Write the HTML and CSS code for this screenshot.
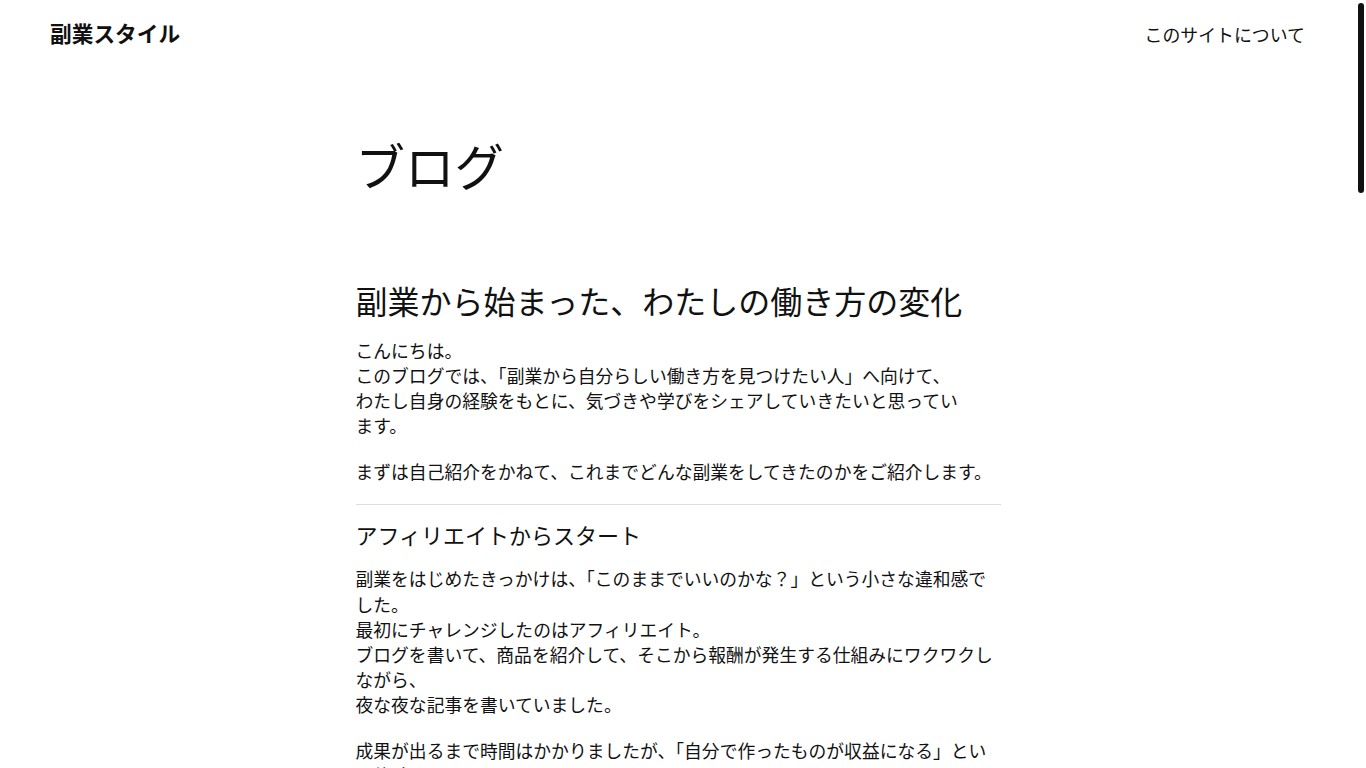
FILE: index.html
```html
<!DOCTYPE html>
<html lang="ja">
<head>
<meta charset="utf-8">
<title>ブログ | 副業スタイル</title>
<link rel="stylesheet" href="styles.css">
</head>
<body>
<div class="scroll-thumb" aria-hidden="true"></div>
<header class="site-header">
  <a class="logo" href="#">副業スタイル</a>
  <nav class="nav"><a href="#">このサイトについて</a></nav>
</header>
<main class="main">
  <h1 class="page-title">ブログ</h1>
  <article class="post">
    <h2 class="post-title">副業から始まった、わたしの働き方の変化</h2>
    <p>こんにちは。<br>このブログでは、「副業から自分らしい働き方を見つけたい人」へ向けて、<br>わたし自身の経験をもとに、気づきや学びをシェアしていきたいと思っています。</p>
    <p>まずは自己紹介をかねて、これまでどんな副業をしてきたのかをご紹介します。</p>
    <hr class="divider">
    <h3 class="section-title">アフィリエイトからスタート</h3>
    <p>副業をはじめたきっかけは、「このままでいいのかな？」という小さな違和感でした。<br>最初にチャレンジしたのはアフィリエイト。<br>ブログを書いて、商品を紹介して、そこから報酬が発生する仕組みにワクワクしながら、<br>夜な夜な記事を書いていました。</p>
    <p>成果が出るまで時間はかかりましたが、「自分で作ったものが収益になる」という体験は、<br>今でもわたしの原点になっています。</p>
    <hr class="divider">
    <h3 class="section-title">Webライターとしての挑戦</h3>
    <p>次に挑戦したのは、クラウドソーシングでのWebライターのお仕事。<br>最初は文字単価も低く、思うように稼げない日々が続きました。<br>それでも、ひとつひとつの案件に丁寧に向き合ううちに、<br>継続で依頼してくださるクライアントさんが少しずつ増えていきました。</p>
    <p>「誰かの役に立つ文章を書く」ことの楽しさを知ったのも、この頃です。</p>
    <hr class="divider">
    <h3 class="section-title">デザインとSNS運用</h3>
    <p>ライティングに慣れてきたころ、バナー制作やSNS運用のお手伝いも始めました。<br>独学でデザインツールを学び、小さなお店のInstagramを担当したことも。<br>フォロワーが増えていく様子を見るのは、とても励みになりました。</p>
    <p>できることが増えるたびに、働き方の選択肢も広がっていく。<br>そんな実感を持てたのは、副業を続けてきたからこそだと思います。</p>
    <hr class="divider">
    <h3 class="section-title">失敗から学んだこと</h3>
    <p>もちろん、うまくいかないこともたくさんありました。<br>納期を詰め込みすぎて体調を崩してしまったり、<br>報酬の安さに疲れて、やる気をなくしてしまったり。</p>
    <p>そこで学んだのは、「無理をしないペースで続けること」の大切さ。<br>副業は短距離走ではなく、長く続けるマラソンのようなものだと感じています。</p>
    <hr class="divider">
    <h3 class="section-title">これからのこと</h3>
    <p>今は本業と副業のバランスを見直しながら、<br>自分らしい働き方を少しずつ形にしているところです。</p>
    <p>このブログでは、副業の始め方や時間の使い方、<br>収入の管理やモチベーションの保ち方など、<br>実際にやってみてわかったことを正直に書いていきます。</p>
    <p>同じように悩んでいる誰かの、小さなヒントになればうれしいです。<br>これからどうぞよろしくお願いします。</p>
    <hr class="divider">
    <h3 class="section-title">よく読まれている記事</h3>
    <p>副業初心者が最初の1か月でやるべきこと<br>本業と副業を両立させる時間の作り方<br>クラウドソーシングで最初の案件を獲得するコツ<br>確定申告で困らないための記録の残し方</p>
    <p>気になる記事があれば、ぜひ読んでみてくださいね。</p>
  </article>
</main>
<footer class="site-footer">
  <p>© 副業スタイル</p>
</footer>
</body>
</html>
```

FILE: styles.css
```css
html {
  background: #fff;
}

body {
  margin: 0;
  padding-right: 10px;
  font-family: "Noto Sans CJK JP", "Noto Sans", sans-serif;
  color: #111;
  background: #fff;
}

a {
  color: inherit;
  text-decoration: none;
}

.scroll-thumb {
  position: fixed;
  top: 3px;
  right: 2px;
  width: 6px;
  height: 190px;
  border-radius: 3px;
  background: #111;
}

.site-header {
  display: flex;
  justify-content: space-between;
  align-items: center;
  height: 70px;
  padding: 0 51px 0 50px;
}

.logo {
  margin-bottom: 3px;
  font-size: 21.7px;
  font-weight: 700;
  line-height: 1.2;
}

.nav {
  font-size: 17.9px;
  line-height: 1.2;
}

.main {
  width: 645px;
  margin: 0 auto;
}

.page-title {
  margin: 65px 0 0;
  font-size: 49.5px;
  font-weight: 400;
  line-height: 1.2;
}

.post {
  padding-top: 87px;
}

.post-title {
  margin: 0 0 18px;
  font-size: 32px;
  font-weight: 400;
  line-height: 1.2;
}

.post p {
  margin: 0 0 20px;
  font-size: 17.8px;
  line-height: 25.2px;
  text-wrap: pretty;
}

.divider {
  margin: 0;
  border: 0;
  border-top: 1px solid #ddd;
  height: 0;
}

.section-title {
  margin: 15px 0 18px;
  font-size: 22px;
  font-weight: 400;
  line-height: 1.3;
}

.site-footer {
  width: 645px;
  margin: 60px auto 0;
  padding: 30px 0 60px;
  font-size: 14px;
  color: #666;
}

.site-footer p {
  margin: 0;
}
```
